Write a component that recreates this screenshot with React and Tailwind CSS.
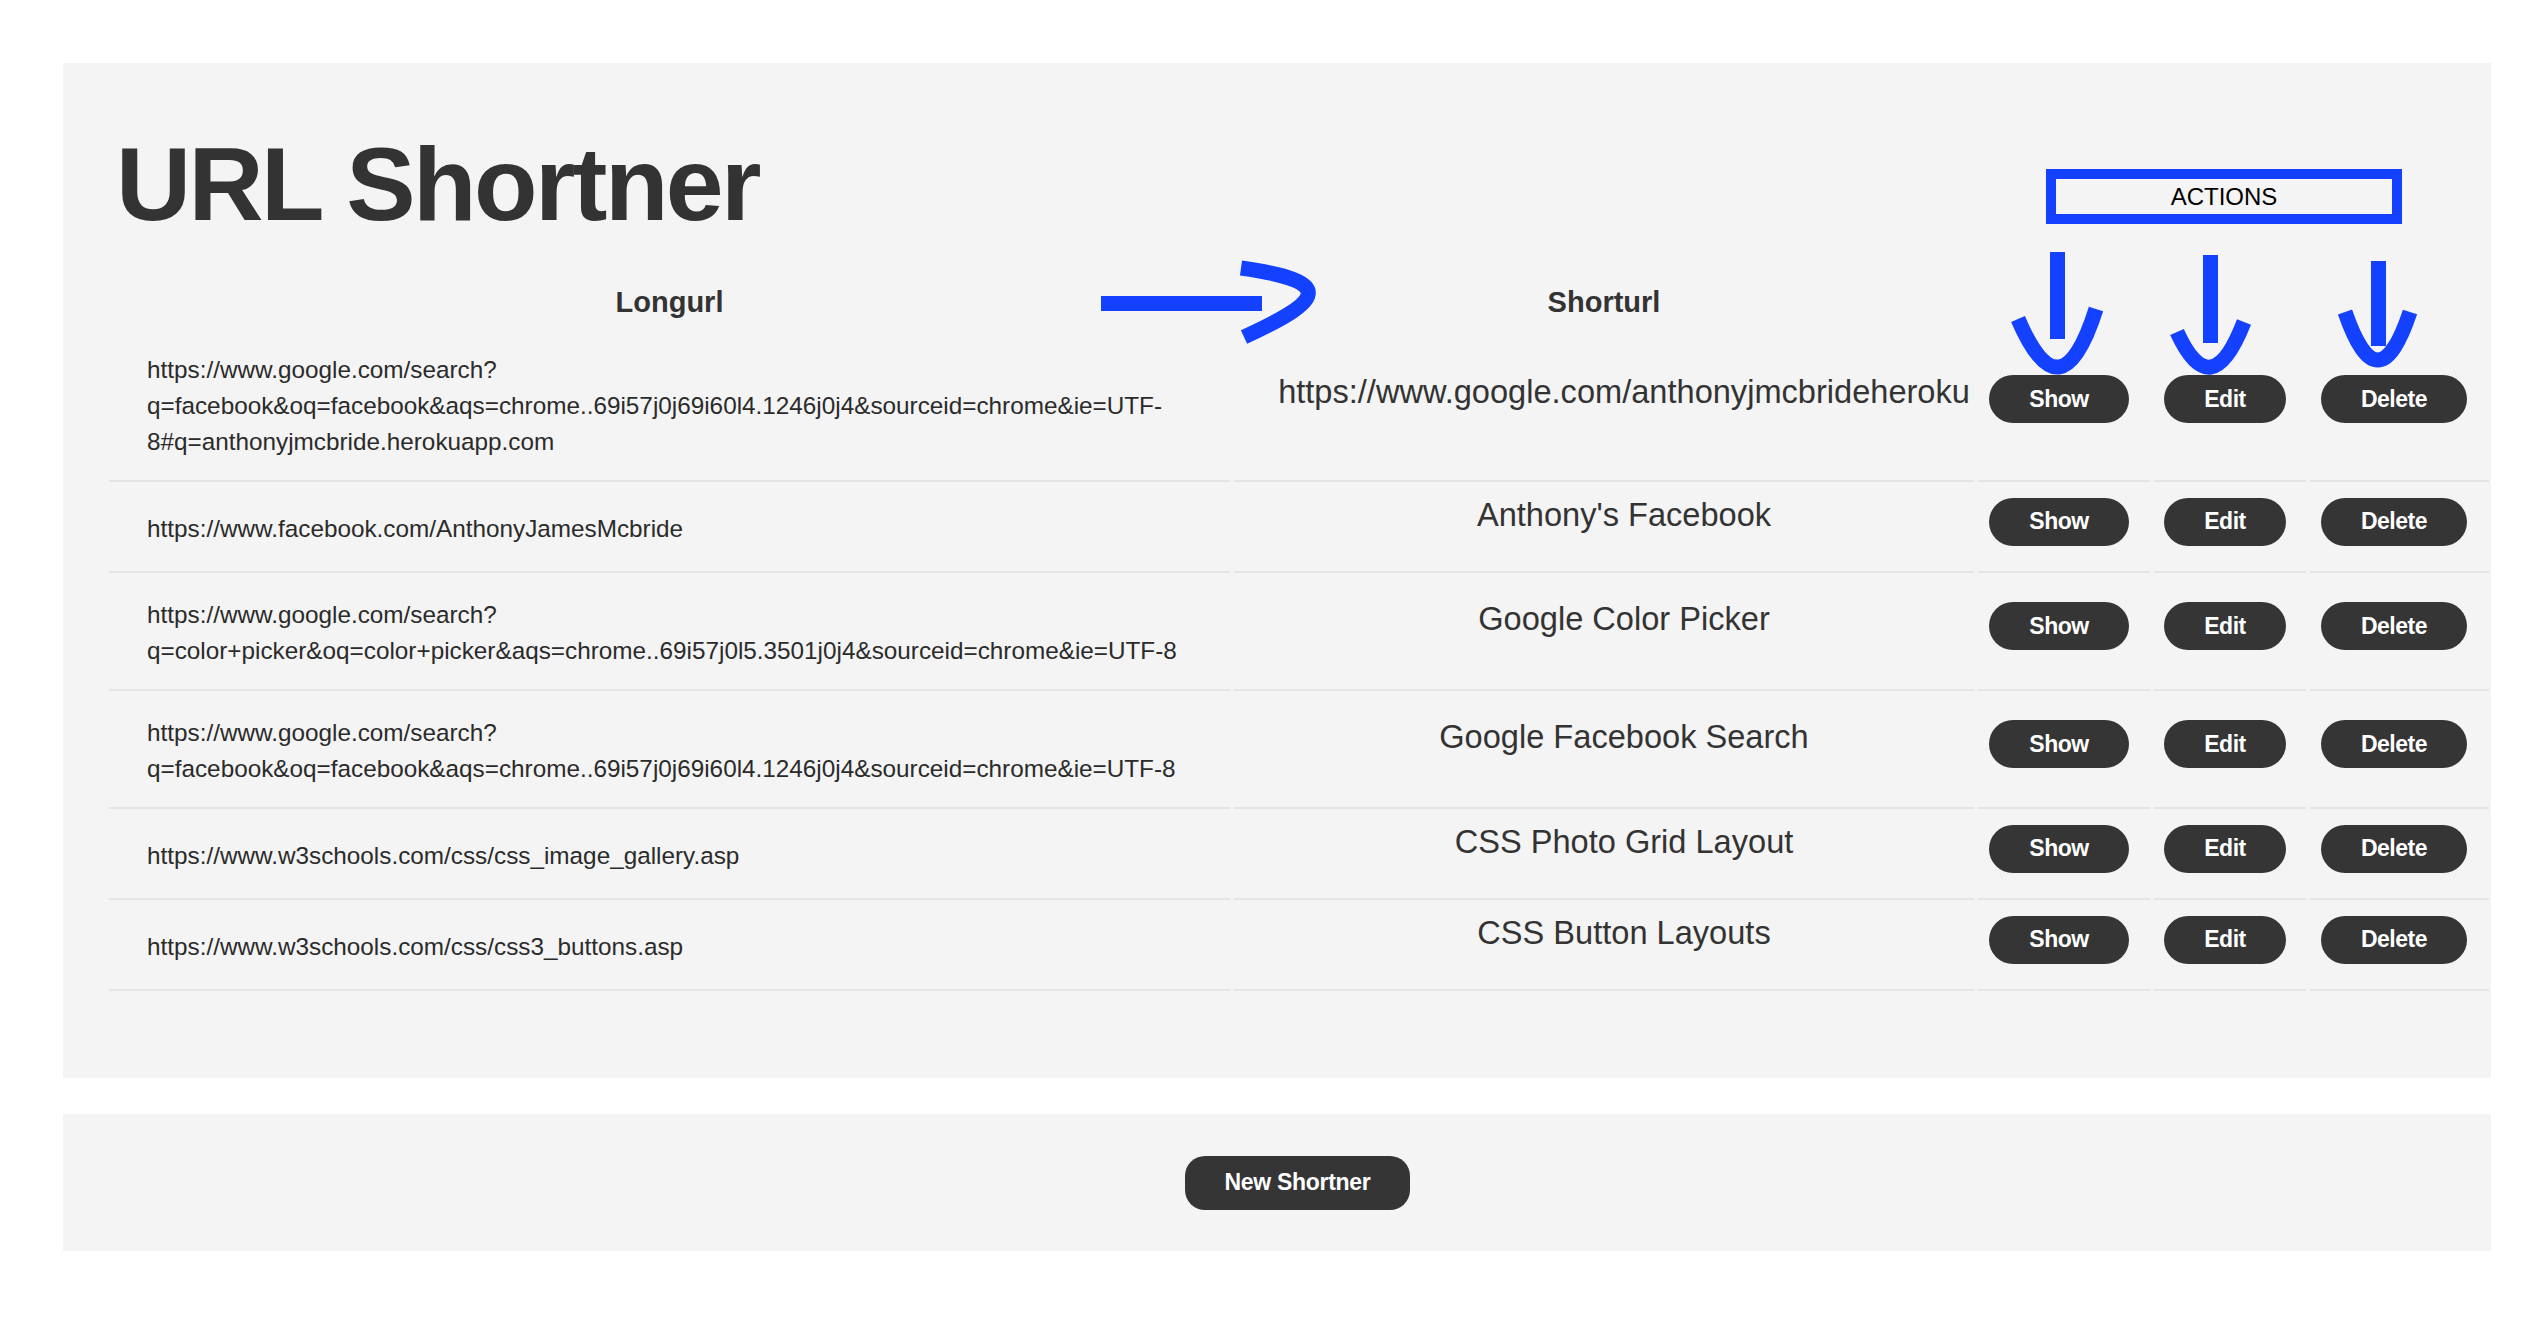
import React from 'react';

const rows = [
  {
    long: [
      'https://www.google.com/search?',
      'q=facebook&oq=facebook&aqs=chrome..69i57j0j69i60l4.1246j0j4&sourceid=chrome&ie=UTF-',
      '8#q=anthonyjmcbride.herokuapp.com',
    ],
    short: 'https://www.google.com/anthonyjmcbrideheroku',
  },
  { long: ['https://www.facebook.com/AnthonyJamesMcbride'], short: "Anthony's Facebook" },
  {
    long: [
      'https://www.google.com/search?',
      'q=color+picker&oq=color+picker&aqs=chrome..69i57j0l5.3501j0j4&sourceid=chrome&ie=UTF-8',
    ],
    short: 'Google Color Picker',
  },
  {
    long: [
      'https://www.google.com/search?',
      'q=facebook&oq=facebook&aqs=chrome..69i57j0j69i60l4.1246j0j4&sourceid=chrome&ie=UTF-8',
    ],
    short: 'Google Facebook Search',
  },
  { long: ['https://www.w3schools.com/css/css_image_gallery.asp'], short: 'CSS Photo Grid Layout' },
  { long: ['https://www.w3schools.com/css/css3_buttons.asp'], short: 'CSS Button Layouts' },
];

function Btn({ children }) {
  return (
    <button className="h-[48px] rounded-[24px] bg-[#353535] px-[40px] text-[23px] font-bold tracking-[-0.5px] text-white">
      {children}
    </button>
  );
}

const cell = 'border-b-2 border-[#e4e4e4]';

export default function App() {
  return (
    <div className="relative h-[1344px] w-[2548px] overflow-hidden bg-white pt-[63px] font-['Liberation_Sans',Arial,sans-serif] text-[#333]">
      <div className="ml-[63px] w-[2428px] bg-[#f4f4f4] pt-[59px] pb-[87px] pl-[46px]">
        <h1 className="pl-[7px] text-[104px] font-bold leading-[124px] tracking-[-2.6px]">URL Shortner</h1>

        <div className="mt-[28px] grid grid-cols-[1121px_740px_172px_152px_179px] gap-x-[4px] gap-y-[4px]">
          <div className="flex h-[54px] items-center justify-center pt-[3px] text-[29px] font-bold">Longurl</div>
          <div className="flex h-[54px] items-center justify-center pt-[3px] text-[29px] font-bold">Shorturl</div>
          <div />
          <div />
          <div />

          {rows.map((r) => (
            <React.Fragment key={r.short}>
              <div className={`flex min-h-[87px] flex-col justify-center py-[20px] pl-[38px] text-[24.3px] leading-[36px] text-[#2b2b2b] ${cell}`}>
                {r.long.map((l) => (
                  <span key={l} className="whitespace-nowrap">{l}</span>
                ))}
              </div>
              <div className={`flex items-center justify-center pl-[40px] pb-[28px] text-[32.6px] leading-[44px] whitespace-nowrap ${cell}`}>
                {r.short}
              </div>
              <div className={`flex items-center justify-center pr-[10px] pb-[14px] ${cell}`}>
                <Btn>Show</Btn>
              </div>
              <div className={`flex items-center justify-center pr-[10px] pb-[14px] ${cell}`}>
                <Btn>Edit</Btn>
              </div>
              <div className={`flex items-center justify-center pr-[11px] pb-[14px] ${cell}`}>
                <Btn>Delete</Btn>
              </div>
            </React.Fragment>
          ))}
        </div>
      </div>

      <div className="mt-[36px] ml-[63px] flex h-[137px] w-[2428px] items-center justify-center bg-[#f4f4f4] pl-[41px]">
        <button className="h-[54px] rounded-[20px] bg-[#353535] px-[40px] text-[23px] font-bold tracking-[-0.3px] text-white">
          New Shortner
        </button>
      </div>

      {/* annotations drawn over the page */}
      <div className="absolute left-[2046px] top-[169px] flex h-[55px] w-[356px] items-center justify-center border-[10px] border-[#1441ff] text-[24px] text-black">
        ACTIONS
      </div>
      <svg className="pointer-events-none absolute left-0 top-0" width="2548" height="1344" fill="none" stroke="#1441ff" strokeWidth="15">
        <path d="M1101 303.5H1262" />
        <path d="M1241 268C1340 282 1320 302 1244 337" />

        <path d="M2057.5 252V339" />
        <path d="M2018 319Q2061 420 2096 309" />

        <path d="M2210.5 255V343" />
        <path d="M2177 332Q2211 407 2244 322" />

        <path d="M2378.5 261V346" />
        <path d="M2345 312Q2378 408 2410 312" />
      </svg>
    </div>
  );
}
